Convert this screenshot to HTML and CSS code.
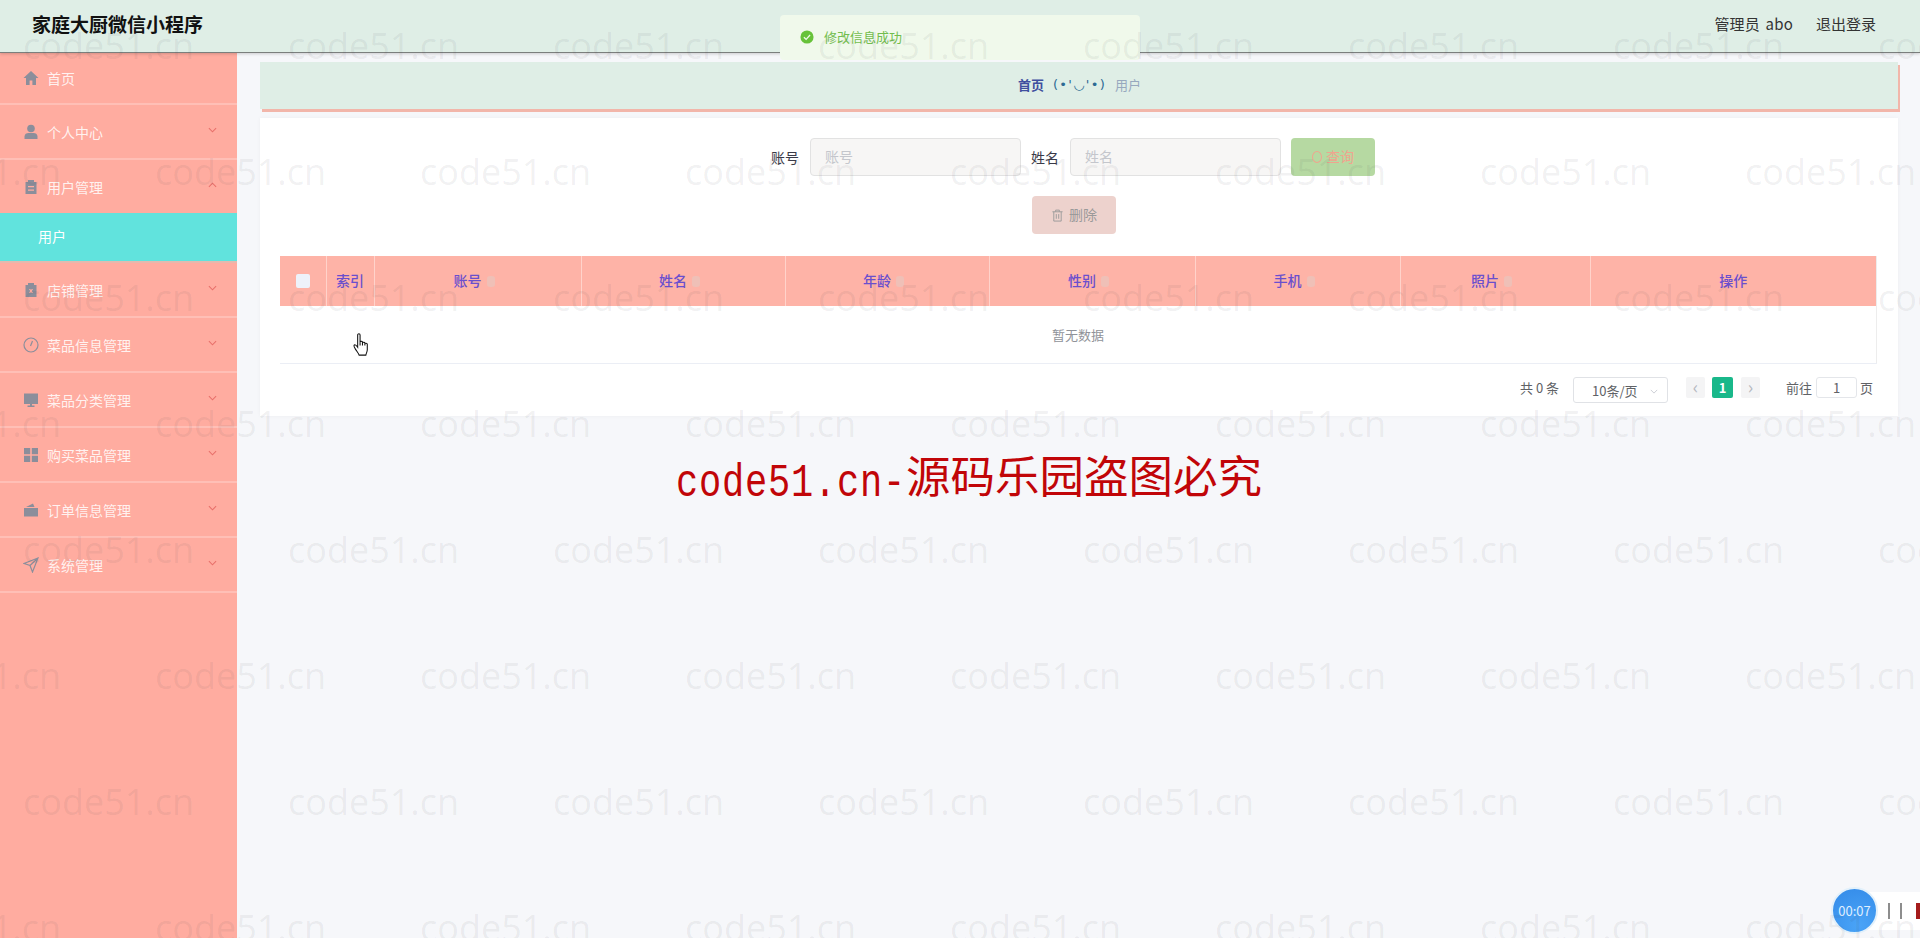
FILE: index.html
```html
<!DOCTYPE html>
<html>
<head>
    <meta charset="utf-8">
    <title>家庭大厨微信小程序</title>
    <link rel="stylesheet" href="styles.css">
</head>
<body>
    <div class="page">
        <header class="topbar">
            <div class="brand">家庭大厨微信小程序</div>
            <div class="user-info">
                <span>管理员 abo</span>
                <span>退出登录</span>
            </div>
        </header>

        <div class="body-wrap">
            <aside class="sidebar">
                <div class="menu-item first">
                    <svg class="menu-icon" viewBox="0 0 16 16"><path d="M8 1 0.5 8H3v7h3.6v-4.5h2.8V15H13V8h2.5z"/></svg>
                    <span class="menu-label">首页</span>
                </div>
                <div class="menu-item">
                    <svg class="menu-icon" viewBox="0 0 16 16"><circle cx="8" cy="4.5" r="3.8"/><path d="M1.5 15v-2.5C1.5 10 3.5 9 5.500 9h5c2 0 4 1 4 3.500V15z"/></svg>
                    <span class="menu-label">个人中心</span>
                    <svg class="chevron" viewBox="0 0 10 6"><path d="M1 1l4 4 4-4"/></svg>
                </div>
                <div class="menu-item open">
                    <svg class="menu-icon" viewBox="0 0 16 16"><path d="M5 1h6v2h2.500v12h-11V3H5zM5 7v1.300h6V7zM5 10.500v1.300h6v-1.300z" fill-rule="evenodd"/></svg>
                    <span class="menu-label">用户管理</span>
                    <svg class="chevron" viewBox="0 0 10 6"><path d="M1 5l4-4 4 4"/></svg>
                </div>
                <div class="submenu-item">用户</div>
                <div class="menu-item">
                    <svg class="menu-icon" viewBox="0 0 16 16"><path d="M5 1h6v2h2.500v12h-11V3H5zM6 7l1.200 2L6 11h1.300L8 9.800 8.700 11H10L8.800 9 10 7H8.700L8 8.200 7.300 7z" fill-rule="evenodd"/></svg>
                    <span class="menu-label">店铺管理</span>
                    <svg class="chevron" viewBox="0 0 10 6"><path d="M1 1l4 4 4-4"/></svg>
                </div>
                <div class="menu-item">
                    <svg class="menu-icon outline" viewBox="0 0 16 16"><circle cx="8" cy="8" r="7"/><path d="M9.500 4 7.500 9"/></svg>
                    <span class="menu-label">菜品信息管理</span>
                    <svg class="chevron" viewBox="0 0 10 6"><path d="M1 1l4 4 4-4"/></svg>
                </div>
                <div class="menu-item">
                    <svg class="menu-icon" viewBox="0 0 16 16"><path d="M1 1.500h14V12H9v1.500h2.500V15h-7v-1.500H7V12H1z"/></svg>
                    <span class="menu-label">菜品分类管理</span>
                    <svg class="chevron" viewBox="0 0 10 6"><path d="M1 1l4 4 4-4"/></svg>
                </div>
                <div class="menu-item">
                    <svg class="menu-icon" viewBox="0 0 16 16"><path d="M1 1h6.200v6.200H1zM8.800 1H15v6.200H8.800zM1 8.800h6.200V15H1zM8.800 8.800H15V15H8.800z"/></svg>
                    <span class="menu-label">购买菜品管理</span>
                    <svg class="chevron" viewBox="0 0 10 6"><path d="M1 1l4 4 4-4"/></svg>
                </div>
                <div class="menu-item">
                    <svg class="menu-icon" viewBox="0 0 16 16"><path d="M1 6h14v8.500H1zM3 5l7-3.500L11.500 5z"/></svg>
                    <span class="menu-label">订单信息管理</span>
                    <svg class="chevron" viewBox="0 0 10 6"><path d="M1 1l4 4 4-4"/></svg>
                </div>
                <div class="menu-item">
                    <svg class="menu-icon outline" viewBox="0 0 16 16"><path d="M15 1 1 6.500l6 2 2.500 6.500zM15 1 7 8.500"/></svg>
                    <span class="menu-label">系统管理</span>
                    <svg class="chevron" viewBox="0 0 10 6"><path d="M1 1l4 4 4-4"/></svg>
                </div>
            </aside>

            <main class="content">
                <div class="breadcrumb">
                    <span class="crumb-home">首页</span>
                    <span class="crumb-face">(•'◡'•)</span>
                    <span class="crumb-now">用户</span>
                </div>

                <section class="card">
                    <div class="search-row">
                        <label class="field-label">账号</label>
                        <input class="field-input" type="text" placeholder="账号">
                        <label class="field-label">姓名</label>
                        <input class="field-input" type="text" placeholder="姓名">
                        <button class="btn-search" type="button"><span class="search-ring"></span>查询</button>
                    </div>
                    <div class="action-row">
                        <button class="btn-delete" type="button">
                            <svg class="trash" viewBox="0 0 14 14"><path d="M1.500 3h11M5 3V1.200h4V3M3 3v10h8V3M5.700 5.500v5M8.300 5.500v5"/></svg>
                            删除
                        </button>
                    </div>

                    <table class="data-table">
                        <colgroup>
                            <col class="col-check"><col class="col-index"><col class="col-a"><col class="col-b"><col class="col-b"><col class="col-c"><col class="col-d"><col class="col-e"><col>
                        </colgroup>
                        <thead>
                            <tr>
                                <th><input class="check" type="checkbox"></th>
                                <th>索引</th>
                                <th>账号<span class="caret"></span></th>
                                <th>姓名<span class="caret"></span></th>
                                <th>年龄<span class="caret"></span></th>
                                <th>性别<span class="caret"></span></th>
                                <th>手机<span class="caret"></span></th>
                                <th>照片<span class="caret"></span></th>
                                <th>操作</th>
                            </tr>
                        </thead>
                        <tbody>
                            <tr><td class="empty" colspan="9">暂无数据</td></tr>
                        </tbody>
                    </table>

                    <div class="pager">
                        <span class="pager-total">共 0 条</span>
                        <span class="pager-size">10条/页<svg class="size-arrow" viewBox="0 0 10 6"><path d="M1 1l4 4 4-4"/></svg></span>
                        <span class="pager-btn">‹</span>
                        <span class="pager-num">1</span>
                        <span class="pager-btn">›</span>
                        <span class="pager-goto">前往</span>
                        <span class="pager-input">1</span>
                        <span class="pager-unit">页</span>
                    </div>
                </section>

                <div class="notice"><span class="notice-latin">code51.cn-</span>源码乐园盗图必究</div>
            </main>
        </div>

        <!-- 提示 -->
        <div class="toast">
            <svg class="toast-icon" viewBox="0 0 16 16"><circle cx="8" cy="8" r="7.500"/><path d="M4.500 8.200 7 10.700l4.500-5"/></svg>
            修改信息成功
        </div>

        <!-- 录屏计时 -->
        <div class="rec-bar"><i></i><i></i><b></b></div>
        <div class="rec-timer">00:07</div>

        <svg class="hand" viewBox="0 0 20 26">
            <path d="M5.500 2c0-1.500 2.500-1.500 2.500 0v7.500c0-1.300 2.500-1.300 2.500 0v1c0-1.300 2.500-1.300 2.500 0v1c0-1.200 2.500-1.200 2.500 0.300v5.700c0 2-1 3-1.500 5.500H7c-.8-2.300-2.300-3.500-4-6.500-1.200-2-2-3.200-1-4 1-.7 2 .2 3.500 2.300z"/>
            <path d="M8 9.500V13M10.500 10.500V13M13 11.500V13"/>
        </svg>

        <div class="watermark">
            <div class="wm-row"><span>code51.cn</span><span>code51.cn</span><span>code51.cn</span><span>code51.cn</span><span>code51.cn</span><span>code51.cn</span><span>code51.cn</span><span>code51.cn</span></div>
            <div class="wm-row even"><span>code51.cn</span><span>code51.cn</span><span>code51.cn</span><span>code51.cn</span><span>code51.cn</span><span>code51.cn</span><span>code51.cn</span><span>code51.cn</span></div>
            <div class="wm-row"><span>code51.cn</span><span>code51.cn</span><span>code51.cn</span><span>code51.cn</span><span>code51.cn</span><span>code51.cn</span><span>code51.cn</span><span>code51.cn</span></div>
            <div class="wm-row even"><span>code51.cn</span><span>code51.cn</span><span>code51.cn</span><span>code51.cn</span><span>code51.cn</span><span>code51.cn</span><span>code51.cn</span><span>code51.cn</span></div>
            <div class="wm-row"><span>code51.cn</span><span>code51.cn</span><span>code51.cn</span><span>code51.cn</span><span>code51.cn</span><span>code51.cn</span><span>code51.cn</span><span>code51.cn</span></div>
            <div class="wm-row even"><span>code51.cn</span><span>code51.cn</span><span>code51.cn</span><span>code51.cn</span><span>code51.cn</span><span>code51.cn</span><span>code51.cn</span><span>code51.cn</span></div>
            <div class="wm-row"><span>code51.cn</span><span>code51.cn</span><span>code51.cn</span><span>code51.cn</span><span>code51.cn</span><span>code51.cn</span><span>code51.cn</span><span>code51.cn</span></div>
            <div class="wm-row even"><span>code51.cn</span><span>code51.cn</span><span>code51.cn</span><span>code51.cn</span><span>code51.cn</span><span>code51.cn</span><span>code51.cn</span><span>code51.cn</span></div>
        </div>
    </div>
</body>
</html>
```

FILE: styles.css
```css
* {
    box-sizing: border-box;
}

body {
    margin: 0;
    font-family: "Noto Sans CJK SC", "Noto Sans", sans-serif;
    font-size: 14px;
    background-color: #f6f7fa;
}

.page {
    position: relative;
    width: 1920px;
    height: 938px;
    overflow: hidden;
    display: flex;
    flex-direction: column;
}

/* top bar */
.topbar {
    height: 53px;
    flex: none;
    display: flex;
    align-items: center;
    justify-content: space-between;
    padding: 0 44px 6px 32px;
    background-color: #dfeee6;
    border-bottom: 1px solid #7b7f7d;
    box-shadow: 0 1px 3px rgba(0, 0, 0, 0.18);
    position: relative;
    z-index: 2;
}

.brand {
    font-size: 19px;
    font-weight: 700;
    color: #111;
}

.user-info {
    display: flex;
    gap: 23px;
    font-size: 15px;
    color: #333;
}

.user-info span:first-child {
    word-spacing: 2px;
    letter-spacing: 0.200px;
}

.body-wrap {
    flex: 1;
    display: flex;
    min-height: 0;
}

/* sidebar */
.sidebar {
    width: 237px;
    flex: none;
    background-color: #ffaca0;
}

.menu-item {
    height: 55px;
    display: flex;
    align-items: center;
    padding: 0 0 0 23px;
    border-bottom: 2px solid #ffbfb6;
    position: relative;
}

.menu-item.first {
    height: 52px;
}

.menu-item.open {
    height: 53px;
    border-bottom: none;
}

.menu-icon {
    width: 16px;
    height: 16px;
    flex: none;
    fill: #8b8e9b;
}

.menu-icon.outline {
    fill: none;
    stroke: #8b8e9b;
    stroke-width: 1.200;
}

.menu-label {
    margin-left: 8px;
    color: rgba(255, 255, 255, 0.85);
}

.chevron {
    position: absolute;
    right: 20px;
    top: 22px;
    width: 9px;
    height: 6px;
    fill: none;
    stroke: #e8706a;
    stroke-width: 1.200;
}

.submenu-item {
    height: 50px;
    line-height: 47px;
    padding-left: 38px;
    color: #fff;
    background-color: #61e3dd;
    border-bottom: 2px solid #e5b9ae;
}

/* main area */
.content {
    flex: 1;
    padding: 9px 22px 0 23px;
    min-width: 0;
}

.breadcrumb {
    height: 47px;
    display: flex;
    align-items: center;
    justify-content: center;
    gap: 9px;
    padding: 0 0 2px 1px;
    background-color: #dfeee6;
    box-shadow: 2px 3px 0 #f2b6aa;
    font-size: 13px;
}

.crumb-home {
    font-weight: 700;
    color: #3f4f9f;
}

.crumb-face {
    font-family: "DejaVu Sans", sans-serif;
    font-size: 13px;
    letter-spacing: 1.300px;
    color: #2d6a94;
}

.crumb-now {
    color: #97a8be;
}

.card {
    margin-top: 9px;
    height: 298px;
    padding: 20px 20px 0;
    background-color: #fff;
    box-shadow: 0 0 4px rgba(0, 0, 0, 0.04);
}

.search-row {
    height: 38px;
    display: flex;
    align-items: center;
    padding-left: 491px;
}

.field-label {
    width: 26px;
    flex: none;
    white-space: nowrap;
    color: #3a3a48;
    margin-right: 13px;
}

.field-input {
    width: 211px;
    height: 38px;
    margin-right: 10px;
    padding: 0 14px 3px;
    font: inherit;
    background-color: #f7f6f5;
    border: 1px solid #e2e2e2;
    border-radius: 4px;
}

.field-input::placeholder {
    color: #c4c6cc;
}

.btn-search {
    width: 84px;
    height: 38px;
    padding: 0 0 3px;
    border: none;
    border-radius: 4px;
    font: inherit;
    color: #f0a48e;
    background-color: #b6d9a2;
}

.search-ring {
    display: inline-block;
    width: 10px;
    height: 12px;
    margin-right: 4px;
    vertical-align: -1px;
    border: 1px solid #f0a48e;
    border-radius: 50%;
}

.action-row {
    height: 38px;
    margin-top: 20px;
    padding-left: 752px;
}

.btn-delete {
    width: 84px;
    height: 38px;
    padding: 0 0 2px;
    border: none;
    border-radius: 4px;
    font: inherit;
    color: #9a9a9a;
    background-color: #edd2cd;
}

.trash {
    width: 13px;
    height: 13px;
    vertical-align: -2px;
    margin-right: 2px;
    fill: none;
    stroke: #9a9a9a;
    stroke-width: 1;
}

/* table */
.data-table {
    width: 1597px;
    margin-top: 22px;
    table-layout: fixed;
    border-collapse: collapse;
    border-right: 1px solid #ededed;
}

.col-check { width: 46px; }
.col-index { width: 48px; }
.col-a { width: 207px; }
.col-b { width: 204px; }
.col-c { width: 206px; }
.col-d { width: 205px; }
.col-e { width: 190px; }

.data-table th {
    height: 50px;
    padding: 0 0 2px;
    font-weight: 500;
    color: #6a4fce;
    background-color: #feb3a7;
    border-right: 1px solid #ffd3cb;
}

.data-table th:last-child {
    border-right: none;
}

.check {
    appearance: none;
    display: block;
    width: 14px;
    height: 14px;
    margin: 2px auto 0;
    border-radius: 2px;
    background-color: #eef2fa;
}

.caret {
    display: inline-block;
    width: 20px;
    height: 10px;
    position: relative;
}

.caret::before {
    content: "";
    position: absolute;
    left: 5px;
    top: 0;
    width: 8px;
    height: 11px;
    border-radius: 3px;
    background-color: #efc0b7;
}

.empty {
    height: 57px;
    text-align: center;
    font-size: 13px;
    color: #909399;
    border-bottom: 1px solid #ebeef5;
}

/* pagination */
.pager {
    display: flex;
    align-items: flex-start;
    margin-top: 13px;
    padding-left: 1240px;
    font-size: 13px;
    color: #606266;
}

.pager > span {
    flex: none;
}

.pager-total {
    width: 53px;
    line-height: 21px;
    white-space: nowrap;
}

.pager-size {
    width: 95px;
    height: 26px;
    line-height: 25px;
    padding-left: 18px;
    position: relative;
    border: 1px solid #e0e2e6;
    border-radius: 3px;
}

.size-arrow {
    position: absolute;
    right: 9px;
    top: 11px;
    width: 8px;
    height: 5px;
    fill: none;
    stroke: #c0c4cc;
}

.pager-btn {
    width: 19px;
    height: 21px;
    margin-left: 18px;
    line-height: 18px;
    text-align: center;
    font-size: 18px;
    color: #b5b8bf;
    background-color: #f4f4f5;
    border-radius: 2px;
}

.pager-num {
    width: 21px;
    height: 21px;
    margin-left: 7px;
    line-height: 21px;
    text-align: center;
    font-weight: 700;
    color: #fff;
    background-color: #19b88a;
    border-radius: 2px;
}

.pager-num + .pager-btn {
    margin-left: 8px;
}

.pager-goto {
    margin-left: 26px;
    width: 30px;
    line-height: 21px;
}

.pager-input {
    width: 41px;
    height: 21px;
    line-height: 19px;
    text-align: center;
    border: 1px solid #e4e6ea;
    border-radius: 3px;
}

.pager-unit {
    margin-left: 3px;
    line-height: 21px;
}

.notice {
    margin-top: 33px;
    padding-left: 416px;
    height: 50px;
    line-height: 50px;
    font-size: 44.500px;
    white-space: nowrap;
    color: #c10508;
}

.notice-latin {
    display: inline-block;
    font-family: "Liberation Mono", monospace;
    font-size: 37px;
    letter-spacing: 0.800px;
    transform: scaleY(1.250);
}

/* overlays */
.toast {
    position: absolute;
    left: 780px;
    top: 15px;
    width: 360px;
    height: 45px;
    z-index: 5;
    display: flex;
    align-items: center;
    padding: 0 0 2px 20px;
    font-size: 13px;
    color: #72bd4d;
    background-color: #f0f9eb;
    border-radius: 4px;
}

.toast-icon {
    width: 14px;
    height: 14px;
    margin-right: 10px;
}

.toast-icon circle {
    fill: #67c23a;
}

.toast-icon path {
    fill: none;
    stroke: #f0f9eb;
    stroke-width: 1.500;
}

.rec-bar {
    position: absolute;
    left: 1860px;
    top: 892px;
    width: 60px;
    height: 38px;
    z-index: 5;
    display: flex;
    align-items: center;
    padding-left: 28px;
    background-color: #fff;
}

.rec-bar i {
    width: 2px;
    height: 16px;
    margin-right: 10px;
    background-color: #8d8d8d;
}

.rec-bar b {
    width: 4px;
    height: 16px;
    margin-left: 4px;
    background-color: #a51c1c;
}

.rec-timer {
    position: absolute;
    left: 1831px;
    top: 887px;
    width: 47px;
    height: 47px;
    z-index: 6;
    line-height: 43px;
    text-align: center;
    font-size: 13px;
    color: #dfeeff;
    border: 2px solid #e3f1fb;
    border-radius: 50%;
    background: radial-gradient(circle at 60% 85%, #4aa4f7, #338ae8);
}

.hand {
    position: absolute;
    left: 352px;
    top: 333px;
    width: 20px;
    height: 25px;
    z-index: 7;
    fill: #fff;
    stroke: #111;
    stroke-width: 1.100;
}

.watermark {
    position: absolute;
    left: 0;
    top: -18px;
    width: 1920px;
    z-index: 6;
    pointer-events: none;
}

.wm-row {
    height: 126px;
    display: flex;
    align-items: center;
    margin-left: 23px;
    font-family: "Open Sans", sans-serif;
    font-size: 36px;
    color: rgba(60, 60, 70, 0.075);
}

.wm-row.even {
    margin-left: -110px;
}

.wm-row span {
    flex: none;
    width: 265px;
}
```
